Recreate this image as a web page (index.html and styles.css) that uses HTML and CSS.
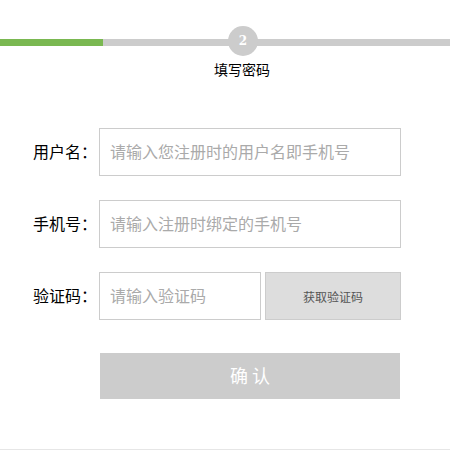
FILE: index.html
```html
<!DOCTYPE html>
<html lang="zh-CN">
<head>
<meta charset="utf-8">
<link rel="stylesheet" href="styles.css">
</head>
<body>
<div class="page">
  <div class="steps">
    <div class="track"><div class="fill"></div></div>
    <div class="step-dot">2</div>
    <div class="step-label">填写密码</div>
  </div>
  <form class="form">
    <div class="row">
      <label class="label">用户名：</label>
      <input class="input" type="text" placeholder="请输入您注册时的用户名即手机号">
    </div>
    <div class="row">
      <label class="label">手机号：</label>
      <input class="input" type="text" placeholder="请输入注册时绑定的手机号">
    </div>
    <div class="row">
      <label class="label">验证码：</label>
      <input class="input input-code" type="text" placeholder="请输入验证码">
      <button type="button" class="code-btn">获取验证码</button>
    </div>
    <button type="button" class="submit">确 认</button>
  </form>
</div>
</body>
</html>
```
FILE: styles.css
```css
* { box-sizing: border-box; }
html, body { margin: 0; padding: 0; background: #fff; }
body { font-family: "Noto Sans CJK SC", "Noto Sans", sans-serif; color: #000; }
.page {
  height: 450px;
  border-bottom: 1px solid #e6e6e6;
}
.steps {
  position: relative;
  padding-top: 39px;
}
.track {
  height: 7px;
  background: #cccccc;
  display: flex;
}
.fill {
  width: 103px;
  background: #7ab851;
}
.step-dot {
  position: absolute;
  left: 228px;
  top: 26px;
  width: 30px;
  height: 30px;
  border-radius: 50%;
  background: #cccccc;
  color: #fff;
  font-family: "DejaVu Serif", serif;
  font-weight: bold;
  font-size: 12px;
  line-height: 30px;
  text-align: center;
}
.step-label {
  margin-top: 13px;
  padding-left: 34px;
  text-align: center;
  font-size: 14px;
  line-height: 20px;
}
.form {
  margin-top: 49px;
  display: flex;
  flex-direction: column;
  gap: 24px;
}
.row {
  display: flex;
  align-items: center;
}
.label {
  width: 99px;
  padding-right: 2px;
  padding-bottom: 2px;
  text-align: right;
  font-size: 16px;
}
.input {
  width: 302px;
  height: 48px;
  border: 1px solid #cccccc;
  padding: 0 0 3px 10px;
  font-family: inherit;
  font-size: 16px;
  outline: none;
  margin: 0;
}
.input::placeholder { color: #aaaaaa; }
.input-code { width: 162px; }
.code-btn {
  margin: 0 0 0 4px;
  width: 136px;
  height: 48px;
  background: #dddddd;
  border: 1px solid #cccccc;
  color: #555;
  font-family: inherit;
  font-size: 12px;
  padding: 0;
}
.submit {
  margin: 9px 0 0 100px;
  width: 300px;
  height: 46px;
  border: none;
  background: #cccccc;
  color: #fff;
  font-family: inherit;
  font-size: 18px;
  padding: 0 0 3px 0;
}
```
